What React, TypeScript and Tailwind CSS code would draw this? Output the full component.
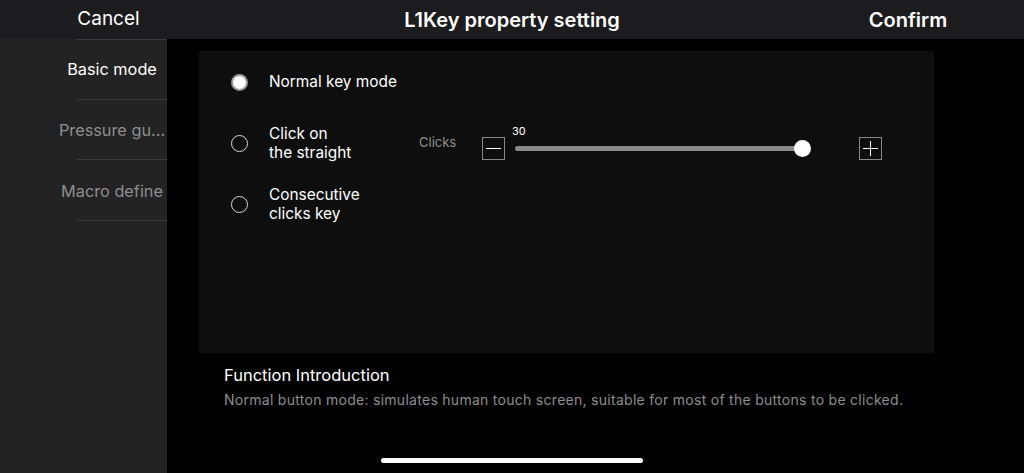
import React from "react";

function Radio({ checked }: { checked?: boolean }) {
  return checked ? (
    <div className="w-[17px] h-[17px] rounded-full bg-white border-[2px] border-[#9a9a9a] shrink-0" />
  ) : (
    <div className="w-[17px] h-[17px] rounded-full border-[1.5px] border-[#d8d8d8] shrink-0" />
  );
}

export default function App() {
  return (
    <div
      className="w-[1024px] h-[473px] bg-black text-white flex flex-col overflow-hidden relative"
      style={{ fontFamily: "Inter, 'Noto Sans', sans-serif" }}
    >
      {/* Top bar */}
      <div className="h-[39px] bg-[#1c1c1e] flex items-center shrink-0">
        <div className="w-[217px] text-center text-[19px] text-white">Cancel</div>
        <div className="flex-1 text-center text-[20px] font-semibold pl-[15px]">L1Key property setting</div>
        <div className="w-[232px] text-center text-[20px] font-semibold">Confirm</div>
      </div>
      <div className="flex flex-1 min-h-0">
        {/* Sidebar */}
        <div className="w-[167px] bg-[#232323] flex flex-col shrink-0">
          <div className="ml-[77px] h-px bg-[#3a3a3a]" />
          {[
            { t: "Basic mode", c: "text-white", h: "h-[59px]" },
            { t: "Pressure gu...", c: "text-[#8e8e8e]", h: "h-[59px] pt-[1px]" },
            { t: "Macro define", c: "text-[#8e8e8e]", h: "h-[60px] pt-[2px]" },
          ].map((it) => (
            <div key={it.t}>
              <div className={`${it.h} flex items-center justify-center pl-[57px] text-[16.3px] ${it.c}`}>
                <span className="whitespace-nowrap">{it.t}</span>
              </div>
              <div className="ml-[77px] h-px bg-[#3a3a3a]" />
            </div>
          ))}
        </div>
        {/* Main */}
        <div className="flex-1 flex flex-col pt-[12px] pl-[32px] pr-[90px]">
          <div className="h-[302px] bg-[#0e0e0e] flex flex-col pl-[32px] pt-[21px] text-[15.4px]">
            <div className="flex items-center h-[18px] gap-[21px] mt-[1px]">
              <Radio checked />
              <span>Normal key mode</span>
            </div>
            <div className="flex items-center mt-[33px] h-[38px]">
              <div className="flex items-center gap-[21px] w-[188px]">
                <Radio />
                <span className="leading-[19px]">
                  Click on
                  <br />
                  the straight
                </span>
              </div>
              <span className="text-[13px] text-[#8e8e8e] w-[63px]">Clicks</span>
              <div className="w-[23px] h-[23px] border border-[#8a8a8a] flex items-center justify-center mt-[11px]">
                <div className="w-[15px] h-[1.5px] bg-white" />
              </div>
              <div className="relative w-[296px] ml-[10px] mt-[11px] h-[18px] flex items-center">
                <span className="absolute left-[-3px] top-[-17px] text-[11px] text-white">30</span>
                <div className="h-[5px] w-[288px] rounded-full bg-[#8a8a8a]" />
                <div className="absolute left-[279px] w-[17px] h-[17px] rounded-full bg-white" />
              </div>
              <div className="w-[23px] h-[23px] border border-[#8a8a8a] flex items-center justify-center mt-[11px] ml-[48px] relative">
                <div className="w-[15px] h-[1.5px] bg-white" />
                <div className="absolute w-[1.5px] h-[15px] bg-white" />
              </div>
            </div>
            <div className="flex items-center gap-[21px] mt-[23px] h-[38px]">
              <Radio />
              <span className="leading-[19px]">
                Consecutive
                <br />
                clicks key
              </span>
            </div>
          </div>
          <div className="pl-[25px] pt-[10px]">
            <div className="text-[16.5px] text-white">Function Introduction</div>
            <div className="text-[14px] text-[#8e8e8e] mt-[1px] tracking-[0.28px] whitespace-nowrap">
              Normal button mode: simulates human touch screen, suitable for most of the buttons to be clicked.
            </div>
          </div>
        </div>
      </div>
      <div className="absolute left-[381px] top-[458px] w-[262px] h-[5px] rounded-full bg-white" />
    </div>
  );
}
